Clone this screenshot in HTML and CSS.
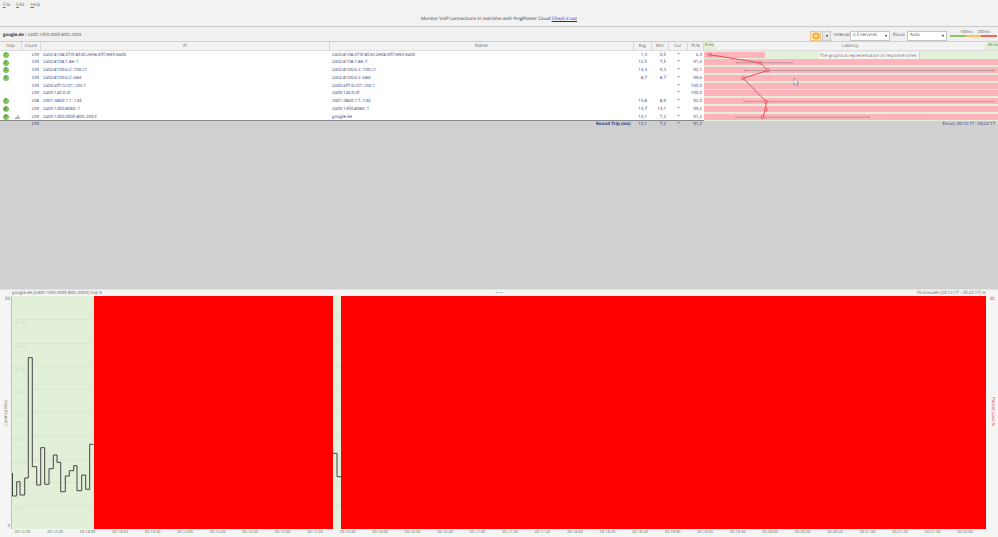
FILE: index.html
```html
<!DOCTYPE html>
<html lang="en">
<head>
<meta charset="utf-8">
<title>PingPlotter</title>
<link rel="stylesheet" href="styles.css">
</head>
<body>
<div class="top">
  <nav class="menu"><span><u>F</u>ile</span><span><u>E</u>dit</span><span><u>H</u>elp</span></nav>
  <p class="banner">Monitor VoIP connections in real-time with PingPlotter Cloud <a href="#">Check it out</a></p>
</div>
<div class="toolbar">
  <div class="crumb"><b>google.de</b> / 2a00:1450:4005:800::2003</div>
  <button class="pause"><svg width="8" height="8" viewBox="0 0 8 8"><circle cx="4" cy="4" r="3.6" fill="#f6a623"/><rect x="2.6" y="2.2" width="1" height="3.6" fill="#fff"/><rect x="4.4" y="2.2" width="1" height="3.6" fill="#fff"/></svg></button>
  <button class="drop"><i class="caret"></i></button>
  <label class="lab lab-int">Interval</label>
  <div class="select">2,5 seconds<i class="caret"></i></div>
  <label class="lab lab-foc">Focus</label>
  <div class="select">Auto<i class="caret"></i></div>
  <div class="legend">
    <div class="legend-labels"><span>100ms</span><span>200ms</span></div>
    <div class="legend-bar"><i class="lg"></i><i class="ly"></i><i class="lr"></i></div>
  </div>
</div>
<div class="grid head">
  <div>Hop</div><div>Count</div><div>IP</div><div>Name</div><div>Avg</div><div>Min</div><div>Cur</div><div>PL%</div>
  <div class="lat-head"><span class="tab">0 ms</span><span class="lat-title">Latency</span><span class="tab tab-r">85 ms</span></div>
</div>
<div class="rows">
  <div class="grid row"><div class="hop"><i>1</i></div><div class="num">239</div><div class="txt">2a02:8108:473f:8530:2e58:4fff:fe95:9a00</div><div class="txt">2a02:8108:473f:8530:2e58:4fff:fe95:9a00</div><div class="num avg">1,3</div><div class="num min">0,5</div><div class="cur">*</div><div class="num pl">6,3</div><div class="lat"><b class="short"></b></div></div>
  <div class="grid row"><div class="hop"><i>2</i></div><div class="num">239</div><div class="txt">2a02:8108:1:8e::1</div><div class="txt">2a02:8108:1:8e::1</div><div class="num avg">12,5</div><div class="num min">7,5</div><div class="cur">*</div><div class="num pl">91,6</div><div class="lat"><b></b></div></div>
  <div class="grid row"><div class="hop"><i>3</i></div><div class="num">239</div><div class="txt">2a02:8100:6:2::100:c1</div><div class="txt">2a02:8100:6:2::100:c1</div><div class="num avg">14,4</div><div class="num min">9,3</div><div class="cur">*</div><div class="num pl">92,1</div><div class="lat"><b></b></div></div>
  <div class="grid row"><div class="hop"><i>4</i></div><div class="num">239</div><div class="txt">2a02:8100:6:2::68d</div><div class="txt">2a02:8100:6:2::68d</div><div class="num avg">8,7</div><div class="num min">8,7</div><div class="cur">*</div><div class="num pl">99,6</div><div class="lat"><b></b></div></div>
  <div class="grid row"><div class="hop"></div><div class="num">239</div><div class="txt">2a00:afff:0:c01::c02:1</div><div class="txt">2a00:afff:0:c01::c02:1</div><div class="num avg"></div><div class="num min"></div><div class="cur">*</div><div class="num pl">100,0</div><div class="lat"><b></b></div></div>
  <div class="grid row"><div class="hop"></div><div class="num">239</div><div class="txt">2a00:1a0:0:4f</div><div class="txt">2a00:1a0:0:4f</div><div class="num avg"></div><div class="num min"></div><div class="cur">*</div><div class="num pl">100,0</div><div class="lat"><b></b></div></div>
  <div class="grid row"><div class="hop"><i>7</i></div><div class="num">238</div><div class="txt">2001:4860:1:1::1d4</div><div class="txt">2001:4860:1:1::1d4</div><div class="num avg">13,8</div><div class="num min">8,9</div><div class="cur">*</div><div class="num pl">92,0</div><div class="lat"><b></b></div></div>
  <div class="grid row"><div class="hop"><i>8</i></div><div class="num">239</div><div class="txt">2a00:1450:8084::1</div><div class="txt">2a00:1450:8084::1</div><div class="num avg">13,7</div><div class="num min">13,1</div><div class="cur">*</div><div class="num pl">99,2</div><div class="lat"><b></b></div></div>
  <div class="grid row"><div class="hop"><i>9</i><svg class="bars" width="5" height="4" viewBox="0 0 6 5"><path d="M.5 5V3.5M2 5V2.5M3.5 5V0M5 5V2" stroke="#666" stroke-width=".8"/></svg></div><div class="num">239</div><div class="txt">2a00:1450:4005:800::2003</div><div class="txt">google.de</div><div class="num avg">13,1</div><div class="num min">7,2</div><div class="cur">*</div><div class="num pl">91,2</div><div class="lat"><b></b></div></div>
  <svg class="lat-graph" width="294" height="71" viewBox="704 50.5 294 71">
    <g stroke="#a08a92" stroke-width=".7" fill="none">
      <path d="M706 54.3H712M737 62.3H792M737 61V63.6M792 61V63.6M745 70H994M745 68.7V71.3M994 68.7V71.3M744 101H994M744 99.7V102.3M765 109H768M736 116.7H869M736 115.4V118M869 115.4V118"/>
    </g>
    <path d="M710 54.3L760 62.3L768 70L743 77.7L766 101L765.7 109L762.7 116.7" fill="none" stroke="#e8404a" stroke-width=".9"/>
    <g fill="#ffb3ba" stroke="#e8404a" stroke-width=".8">
      <circle cx="710" cy="54.3" r="1.4"/><circle cx="760" cy="62.3" r="1.4"/><circle cx="768" cy="70" r="1.4"/><circle cx="743" cy="77.7" r="1.4"/><circle cx="766" cy="101" r="1.4"/><circle cx="765.7" cy="109" r="1.4"/><circle cx="762.7" cy="116.7" r="1.4"/>
    </g>
    <path d="M794 77.5V84.5L795.5 83L797 85.5L798 85L796.8 82.6H799Z" fill="#fff" stroke="#555" stroke-width=".5"/>
  </svg>
  <div class="tip">The graphical representation of response times</div>
</div>
<div class="grid summary">
  <div></div><div class="num">239</div><div></div><div class="rt">Round Trip (ms)</div><div class="num avg">13,1</div><div class="num min">7,2</div><div class="cur">*</div><div class="num pl">91,2</div><div class="focus">Focus: 20:12:17 - 20:22:17</div>
</div>
<div class="gray"></div>
<section class="lower">
  <header class="lower-title"><span>google.de (2a00:1450:4005:800::2003) hop 9</span><span class="grip">• • •</span><span class="range">10 minutes (20:12:17 - 20:22:17) ⊖</span></header>
  <div class="chart">
    <div class="yaxis"><span>50</span><em>Latency (ms)</em><span class="zero">0</span></div>
    <div class="plot">
      <div class="tick"></div><div class="tick">45 ms</div><div class="tick">40 ms</div><div class="tick">35 ms</div><div class="tick">30 ms</div><div class="tick">25 ms</div><div class="tick">20 ms</div><div class="tick">15 ms</div><div class="tick">10 ms</div><div class="tick">5 ms</div>
      <svg class="trace" width="974" height="233" viewBox="12 296 974 233">
        <path d="M12.5 473V496H16.7V481.7H20V495H24.7V478H28.3V357.7H32.3V466.7H36.7V485H40.7V447.7H44.7V484.3H49V468.7H53.3V455H57V462.3H60.7V491.7H65.3V476H69.3V470.7H73.7V465.7H77V490.7H81.7V475H85.7V489.3H89.7V444.3H93.5M333 453.3H337V476.7H341" fill="none" stroke="#444" stroke-width="1"/>
      </svg>
      <div class="loss loss-a"></div>
      <div class="loss loss-b"></div>
    </div>
    <div class="yaxis-r"><span>30</span><em>Packet Loss %</em></div>
  </div>
  <div class="xaxis">
    <span>20:12:20</span><span>20:12:40</span><span>20:13:00</span><span>20:13:20</span><span>20:13:40</span><span>20:14:00</span><span>20:14:20</span><span>20:14:40</span><span>20:15:00</span><span>20:15:20</span><span>20:15:40</span><span>20:16:00</span><span>20:16:20</span><span>20:16:40</span><span>20:17:00</span><span>20:17:20</span><span>20:17:40</span><span>20:18:00</span><span>20:18:20</span><span>20:18:40</span><span>20:19:00</span><span>20:19:20</span><span>20:19:40</span><span>20:20:00</span><span>20:20:20</span><span>20:20:40</span><span>20:21:00</span><span>20:21:20</span><span>20:21:40</span><span>20:22:00</span>
  </div>
</section>
</body>
</html>
```

FILE: styles.css
```css
* { box-sizing: border-box; }
html, body { margin: 0; padding: 0; }
body {
  width: 998px;
  height: 537px;
  overflow: hidden;
  display: flex;
  flex-direction: column;
  background: #f0f0f0;
  font-family: "Open Sans", "Liberation Sans", sans-serif;
  font-size: 4.4px;
  line-height: 7px;
  color: #3a3a3a;
  text-rendering: geometricPrecision;
}

.top { height: 27px; padding-top: 1px; border-bottom: 1px solid #c8c8c8; background: #f2f2f2; }
.menu { display: flex; gap: 6px; padding-left: 3px; height: 15px; line-height: 8px; font-size: 4.6px; color: #666; }
.banner { margin: 0; text-align: center; line-height: 7px; font-size: 4.6px; color: #333; }
.banner a { color: #1a1ae0; }

.toolbar { height: 15px; display: flex; align-items: center; background: #f0f0f0; border-bottom: 1px solid #cfcfcf; padding-top: 3px; }
.crumb { width: 810px; padding-left: 3px; color: #555; }
.crumb b { color: #333; }
.pause, .drop { height: 10px; padding: 0; display: flex; align-items: center; justify-content: center; }
.pause { width: 11px; border: 1px solid #e8c48a; background: #fbe9c9; }
.drop { width: 9px; margin-left: 1px; border: 1px solid #ccc; background: #e6e6e6; }
.caret { display: block; width: 0; height: 0; border: 1.6px solid transparent; border-top: 2px solid #222; border-bottom: 0; }
.lab { color: #555; }
.lab-int { width: 19px; padding-left: 3px; }
.lab-foc { width: 17px; padding-left: 3px; }
.select { width: 40px; height: 10px; padding: 0 2px; display: flex; align-items: center; justify-content: space-between; background: #fff; border: 1px solid #c4c4c4; color: #555; }
.legend { width: 47px; margin-left: 3px; padding-bottom: 3px; }
.legend-labels { display: flex; height: 4px; line-height: 4px; padding-left: 10px; gap: 5px; font-size: 4px; color: #666; }
.legend-bar { display: flex; height: 2px; }
.legend-bar i { flex: 1; }
.lg { background: #8cc665; }
.ly { background: #fbbf5d; }
.lr { background: #f1665a; }

.grid { display: grid; grid-template-columns: 22px 19px 289px 303.5px 18.5px 17px 19px 16px 294px; }
.head { height: 8.5px; line-height: 8px; background: #f2f2f2; border-bottom: 1px solid #dcdcdc; color: #666; text-align: center; }
.head > div { border-right: 1px solid #d8d8d8; }
.head > .lat-head { border-right: 0; display: flex; justify-content: space-between; font-size: 4px; }
.lat-title { font-size: 4.6px; }
.tab { width: 13px; padding-left: 1px; text-align: left; background: #e2f0d9; color: #3f6a3a; clip-path: polygon(0 0, 70% 0, 100% 100%, 0 100%); }
.tab-r { width: 15px; clip-path: polygon(30% 0, 100% 0, 100% 100%, 0 100%); padding-left: 5px; white-space: nowrap; }

.rows { position: relative; background: #fff; height: 70.5px; border-bottom: 1px solid #8a8a8a; }
.row { height: 7.8px; line-height: 8.4px; color: #3c477f; }
.hop { display: flex; align-items: center; padding-left: 2.5px; gap: 6px; }
.hop i { display: block; width: 6px; height: 6px; border-radius: 50%; background: #8ccf6c; border: .5px solid #74bd54; color: #2c6420; font-style: normal; font-size: 4.4px; line-height: 5px; text-align: center; }
.num { text-align: right; padding-right: 2px; }
.avg { padding-right: 5px; }
.min { padding-right: 3px; }
.pl { padding-right: 2px; }
.cur { text-align: center; }
.txt { padding-left: 2px; white-space: nowrap; }
.lat { background: #e2f0d9; padding-top: 1px; height: 7.8px; }
.lat b { display: block; height: 6px; background: #ffb3ba; }
.lat .short { width: 61px; }
.lat-graph { position: absolute; left: 704px; top: 0; }
.tip { position: absolute; left: 819px; top: 1.5px; width: 101px; height: 8px; line-height: 8px; padding-left: 1px; background: #f6f6f6; border: 0 solid #ccc; border-width: 0 1px 1px 0; color: #777; white-space: nowrap; }

.summary { height: 8px; line-height: 6.5px; background: #d0d0d0; color: #2f3a78; }
.rt { text-align: right; padding-right: 3px; font-weight: 700; }
.focus { text-align: right; padding-right: 3px; }
.gray { height: 160px; background: #d0d0d0; }

.lower { flex: 1; display: flex; flex-direction: column; background: #f5f5f5; border-top: 1px solid #e4e4e4; min-height: 0; }
.lower-title { height: 6px; padding: 0 12px; line-height: 6px; display: grid; grid-template-columns: 1fr auto 1fr; color: #666; }
.grip { color: #666; }
.range { text-align: right; }
.chart { display: flex; height: 232.5px; }
.yaxis { width: 12px; position: relative; border-right: 1px solid #c0c0c0; display: flex; flex-direction: column; justify-content: space-between; align-items: flex-end; padding-right: 1px; color: #666; }
.yaxis em { font-style: normal; writing-mode: vertical-rl; transform: rotate(180deg); margin-right: 0; }
.zero { line-height: 5px; }
.plot { position: relative; width: 974px; background: #e2f0d9; }
.tick { height: 23.25px; padding-left: 2px; line-height: 6px; border-top: 1px solid #d8e9cc; color: #c9dcba; }
.tick:first-child { border-top: 0; }
.trace { position: absolute; left: 0; top: 0; }
.loss { position: absolute; top: 0; bottom: 0; background: #f00; }
.loss-a { left: 81.5px; width: 239.5px; }
.loss-b { left: 329px; right: 0; }
.yaxis-r { flex: 1; display: flex; flex-direction: column; align-items: center; color: #e0222a; gap: 94px; }
.yaxis-r em { font-style: normal; writing-mode: vertical-rl; }
.xaxis { display: flex; padding-left: 6.25px; line-height: 7px; color: #5a6b50; font-size: 4px; }
.xaxis span { flex: 0 0 32.5px; text-align: center; }
```
